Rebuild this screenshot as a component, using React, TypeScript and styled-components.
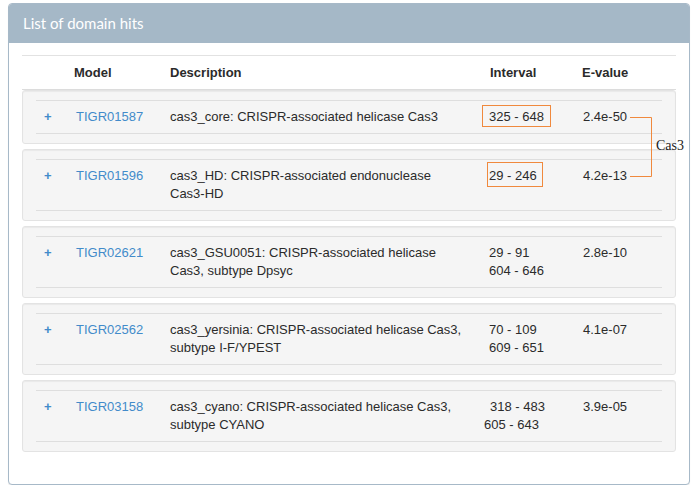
import React from 'react'
import styled, { createGlobalStyle } from 'styled-components'

const GlobalStyle = createGlobalStyle`
  html, body {
    margin: 0;
    padding: 0;
    background: #fff;
    font-family: 'Liberation Sans', Arial, sans-serif;
    color: #2b2b2b;
  }
`

const Page = styled.div`
  position: relative;
  padding: 3px 10px 0 8px;
`

const Panel = styled.div`
  border: 1px solid #a7b9c8;
  border-radius: 4px;
  background: #fff;
  box-shadow: 0 1px 1px rgba(0, 0, 0, 0.08);
  overflow: hidden;
`

const PanelHeading = styled.div`
  background: #a5b8c7;
  color: #fff;
  padding: 10px 14px 10px 14px;
  font-family: Lato, 'DejaVu Sans', sans-serif;
  font-size: 15px;
  line-height: 18px;
  border-bottom: 1px solid #a5b8c7;
`

const PanelBody = styled.div`
  padding: 12px 13px 27px 13px;
`

const HeadRow = styled.div`
  display: grid;
  grid-template-columns: 44px 96px 320px 92px 1fr;
  border-top: 1px solid #e2e2e2;
  border-bottom: 1px solid #dcdcdc;
  & > div {
    padding: 8px 8px;
    line-height: 17px;
    font-size: 13px;
    font-weight: bold;
    color: #2b2b2b;
  }
`

const Well = styled.div`
  background: #f5f5f5;
  border: 1px solid #e3e3e3;
  border-radius: 3px;
  box-shadow: inset 0 1px 1px rgba(0, 0, 0, 0.05);
  padding: 9px 13px;
  margin-bottom: 5px;
`

const HitRow = styled.div`
  display: grid;
  grid-template-columns: 32px 94px 319px 94px 1fr;
  border-top: 1px solid #dedede;
  border-bottom: 1px solid #dedede;
  & > div {
    padding: 7px 8px;
    line-height: 18px;
    font-size: 13px;
    color: #2b2b2b;
  }
`

const Toggle = styled.div`
  && {
    color: #428bca;
    font-weight: bold;
  }
`

const ModelLink = styled.a`
  color: #428bca;
  text-decoration: none;
`

const Line = styled.span<{ $indent?: number }>`
  display: block;
  white-space: nowrap;
  margin-left: ${p => p.$indent || 0}px;
`

const Marked = styled.span<{ $t: number; $r: number; $b: number; $l: number }>`
  position: relative;
  display: inline-block;
  &::after {
    content: '';
    position: absolute;
    top: ${p => p.$t}px;
    right: ${p => p.$r}px;
    bottom: ${p => p.$b}px;
    left: ${p => p.$l}px;
    border: 1px solid #f0893d;
  }
`

const Bracket = styled.div`
  position: absolute;
  left: 629px;
  top: 116px;
  width: 70px;
  height: 62px;
`

const BracketLabel = styled.span`
  position: absolute;
  left: 27px;
  top: 22px;
  font-family: 'Liberation Serif', 'Times New Roman', serif;
  font-size: 14px;
  color: #222;
`

type Hit = {
  model: string
  desc: string[]
  intervals: { text: string; indent?: number }[]
  evalue: string
  mark?: { t: number; r: number; b: number; l: number }
}

const hits: Hit[] = [
  {
    model: 'TIGR01587',
    desc: ['cas3_core: CRISPR-associated helicase Cas3'],
    intervals: [{ text: '325 - 648' }],
    evalue: '2.4e-50',
    mark: { t: -3, r: -7, b: -1, l: -7 },
  },
  {
    model: 'TIGR01596',
    desc: ['cas3_HD: CRISPR-associated endonuclease', 'Cas3-HD'],
    intervals: [{ text: '29 - 246' }],
    evalue: '4.2e-13',
    mark: { t: -5, r: -6, b: -2, l: -2 },
  },
  {
    model: 'TIGR02621',
    desc: ['cas3_GSU0051: CRISPR-associated helicase', 'Cas3, subtype Dpsyc'],
    intervals: [{ text: '29 - 91' }, { text: '604 - 646' }],
    evalue: '2.8e-10',
  },
  {
    model: 'TIGR02562',
    desc: ['cas3_yersinia: CRISPR-associated helicase Cas3,', 'subtype I-F/YPEST'],
    intervals: [{ text: '70 - 109' }, { text: '609 - 651' }],
    evalue: '4.1e-07',
  },
  {
    model: 'TIGR03158',
    desc: ['cas3_cyano: CRISPR-associated helicase Cas3,', 'subtype CYANO'],
    intervals: [{ text: '318 - 483', indent: 1 }, { text: '605 - 643', indent: -5 }],
    evalue: '3.9e-05',
  },
]

const App: React.FC = () => {
  return <Page>
    <GlobalStyle />
    <Panel>
      <PanelHeading>List of domain hits</PanelHeading>
      <PanelBody>
        <HeadRow>
          <div />
          <div>Model</div>
          <div>Description</div>
          <div>Interval</div>
          <div>E-value</div>
        </HeadRow>
        {hits.map(hit =>
          <Well key={hit.model}>
            <HitRow>
              <Toggle>+</Toggle>
              <div><ModelLink href='#'>{hit.model}</ModelLink></div>
              <div>{hit.desc.map((d, i) => <Line key={i}>{d}</Line>)}</div>
              <div>
                {hit.intervals.map((iv, i) => hit.mark
                  ? <Marked key={i} $t={hit.mark.t} $r={hit.mark.r} $b={hit.mark.b} $l={hit.mark.l}>{iv.text}</Marked>
                  : <Line key={i} $indent={iv.indent}>{iv.text}</Line>)}
              </div>
              <div>{hit.evalue}</div>
            </HitRow>
          </Well>)}
      </PanelBody>
    </Panel>
    <Bracket>
      <svg width='24' height='62' viewBox='0 0 24 62'>
        <path d='M1 1.5 H22.5 V60.5 H1' fill='none' stroke='#f0893d' strokeWidth='1' />
      </svg>
      <BracketLabel>Cas3</BracketLabel>
    </Bracket>
  </Page>
}

export default App
